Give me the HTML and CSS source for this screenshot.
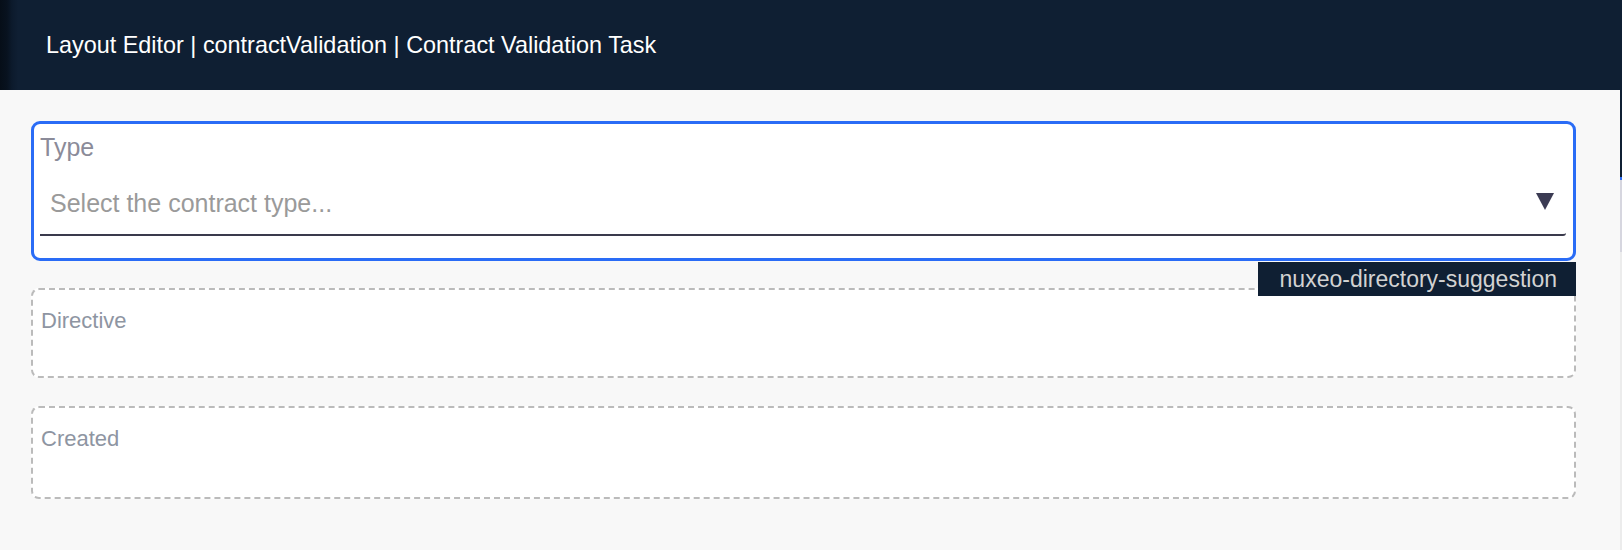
FILE: index.html
```html
<!DOCTYPE html>
<html lang="en">
<head>
<meta charset="utf-8">
<title>Layout Editor</title>
<link rel="stylesheet" href="styles.css">
</head>
<body>
<div class="app">
  <div class="editor">
    <header class="topbar">
      <h1 class="title">Layout Editor | contractValidation | Contract Validation Task</h1>
    </header>
    <main class="canvas">
      <div class="field field--active">
        <div class="field-label field-label--lg">Type</div>
        <div class="select">
          <span class="placeholder">Select the contract type...</span>
          <svg class="caret" width="18" height="17" viewBox="0 0 18 17"><polygon points="0,0 18,0 9,17" fill="#3b3b53"/></svg>
        </div>
        <div class="tag">nuxeo-directory-suggestion</div>
      </div>
      <div class="field field--slot field--first">
        <div class="field-label">Directive</div>
      </div>
      <div class="field field--slot field--tall">
        <div class="field-label">Created</div>
      </div>
    </main>
  </div>
  <div class="edge">
    <div class="edge-top"></div>
    <div class="edge-accent"></div>
    <div class="edge-mid"></div>
    <div class="edge-rest"></div>
  </div>
</div>
</body>
</html>
```

FILE: styles.css
```css
html, body {
  margin: 0;
  padding: 0;
  height: 100%;
}
body {
  font-family: "Liberation Sans", Arial, Helvetica, sans-serif;
  background: #f8f8f8;
}
.app {
  display: flex;
  height: 550px;
  overflow: hidden;
}
.editor {
  flex: 1;
  display: flex;
  flex-direction: column;
  min-width: 0;
}
.topbar {
  height: 90px;
  flex: none;
  display: flex;
  align-items: center;
  padding-left: 46px;
  background: linear-gradient(to right, #060e18 0, #08121f 7px, #0c1a2c 12px, #0f1f33 18px, #0f1f33 100%);
}
.title {
  margin: 0;
  font-size: 23.4px;
  font-weight: normal;
  color: #ffffff;
  line-height: 28px;
}
.canvas {
  flex: 1;
  padding: 31px 44px 0 31px;
  background: #f8f8f8;
}
.field {
  position: relative;
  background: #ffffff;
}
.field--active {
  border: 3px solid #2a6cf6;
  border-radius: 9px;
  padding: 8px 7px 22px 6px;
  z-index: 2;
}
.field--slot {
  margin-top: 28px;
  border: 2px dashed #bbbbbb;
  border-radius: 8px;
  padding: 18px 8px 42px 8px;
}
.field--first {
  margin-top: 27px;
}
.field--tall {
  padding-bottom: 45px;
}
.field-label {
  font-size: 22px;
  line-height: 26px;
  color: #8e95a2;
}
.field-label--lg {
  font-size: 25px;
  line-height: 30px;
  color: #8b8b99;
}
.select {
  display: flex;
  align-items: center;
  justify-content: space-between;
  padding: 26px 12px 16px 10px;
  border-bottom: 2px solid #3a3a4c;
  border-bottom-right-radius: 3px;
}
.placeholder {
  font-size: 25px;
  line-height: 30px;
  color: #9a9a9a;
}
.caret {
  display: block;
  margin-bottom: 4px;
}
.tag {
  position: absolute;
  top: calc(100% + 4px);
  right: -3px;
  height: 34px;
  line-height: 34px;
  padding: 0 19px 0 22px;
  font-size: 23px;
  color: #d2d2d2;
  background: #0f1f33;
  white-space: nowrap;
}
.edge {
  width: 2px;
  flex: none;
  display: flex;
  flex-direction: column;
}
.edge-top {
  height: 177px;
  background: #0f1f33;
}
.edge-accent {
  height: 3px;
  background: #2a6cf6;
}
.edge-mid {
  height: 72px;
  background: #d6d6df;
}
.edge-rest {
  flex: 1;
  background: #ececec;
}
```
